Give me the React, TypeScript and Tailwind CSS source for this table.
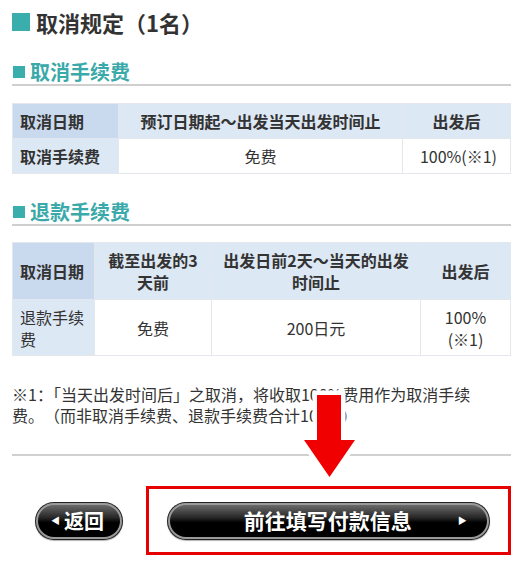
import React from "react";

const font = { fontFamily: '"Noto Sans CJK SC", "Noto Sans", sans-serif' };

function SubHead({ children }: { children: React.ReactNode }) {
  return (
    <div className="flex items-center h-[26px] border-b-2 border-[#cfcfcf]">
      <span className="w-[12px] h-[12px] bg-[#3aadad] ml-[1px] mr-[5px]" />
      <span className="text-[20px] font-bold text-[#3aa9a9] leading-none">{children}</span>
    </div>
  );
}

function Pill({ children, className }: { children: React.ReactNode; className?: string }) {
  return (
    <div
      className={
        "rounded-full p-[1px] bg-[#222] shadow-[0_1px_1px_rgba(0,0,0,0.3)] " + (className || "")
      }
    >
      <div className="h-full rounded-full border-2 border-[#9a9a9a] bg-[linear-gradient(to_bottom,#6a6a6a_0%,#262626_40%,#000_55%,#000_100%)] flex items-center text-white font-bold">
        {children}
      </div>
    </div>
  );
}

export default function App() {
  const th1 = "bg-[#c9d9ee] border border-[#e4e8ee] font-bold text-left pl-[7px]";
  const th = "bg-[#dde8f5] border border-[#e4e8ee] font-bold text-center";
  const td = "bg-white border border-[#e4e8ee] text-center";
  return (
    <div className="relative w-[523px] h-[573px] bg-white text-[#333] px-3 pt-[7px]" style={font}>
      <div className="flex items-center h-[30px]">
        <span className="w-[18px] h-[18px] bg-[#3aadad] mr-[6px]" />
        <span className="text-[22px] font-bold text-[#333] leading-none">取消规定（1名）</span>
      </div>

      <div className="mt-[23px]">
        <SubHead>取消手续费</SubHead>
      </div>

      <table className="mt-[17px] w-[499px] border-collapse text-[16px] table-fixed">
        <colgroup>
          <col className="w-[106px]" />
          <col className="w-[284px]" />
          <col />
        </colgroup>
        <tbody>
          <tr className="h-[35px]">
            <td className={th1}>取消日期</td>
            <td className={th}>预订日期起～出发当天出发时间止</td>
            <td className={th}>出发后</td>
          </tr>
          <tr className="h-[35px]">
            <td className={"bg-[#dde8f5] border border-[#e4e8ee] font-bold text-left pl-[7px]"}>取消手续费</td>
            <td className={td}>免费</td>
            <td className={td + " pl-[4px]"}>100%(※1)</td>
          </tr>
        </tbody>
      </table>

      <div className="mt-[26px]">
        <SubHead>退款手续费</SubHead>
      </div>

      <table className="mt-[16px] w-[499px] border-collapse text-[16px] leading-[22px] table-fixed">
        <colgroup>
          <col className="w-[82px]" />
          <col className="w-[117px]" />
          <col className="w-[209px]" />
          <col />
        </colgroup>
        <tbody>
          <tr className="h-[57px]">
            <td className={th1}>取消日期</td>
            <td className={th + " px-[10px]"}>截至出发的3天前</td>
            <td className={th + " px-[8px]"}>出发日前2天～当天的出发时间止</td>
            <td className={th}>出发后</td>
          </tr>
          <tr className="h-[56px]">
            <td className={"bg-[#dde8f5] border border-[#e4e8ee] text-left pl-[7px] pr-[6px]"}>退款手续费</td>
            <td className={td}>免费</td>
            <td className={td}>200日元</td>
            <td className={td + " px-[10px]"}>100%(※1)</td>
          </tr>
        </tbody>
      </table>

      <p className="mt-[28px] text-[16px] leading-[21px] text-[#333] pr-[20px]">
        ※1：「当天出发时间后」之取消，将收取100%费用作为取消手续费。　（而非取消手续费、退款手续费合计100%）
      </p>

      <div className="mt-[28px] h-[2px] bg-[#d0d0d0]" />

      <div className="mt-[30px] flex items-center pl-[23px]">
        <Pill className="w-[88px] h-[38px]">
          <span className="text-[9px] ml-[13px] mr-[4px]">◀</span>
          <span className="text-[20px] leading-none">返回</span>
        </Pill>
        <div className="ml-[23px] w-[366px] h-[69px] border-[3px] border-[#e60000] flex items-center pl-[18px]">
          <Pill className="w-[323px] h-[38px]">
            <span className="flex-1 text-center text-[21px] leading-none pl-[28px]">前往填写付款信息</span>
            <span className="text-[9px] mr-[20px]">▶</span>
          </Pill>
        </div>
      </div>

      <svg className="absolute left-[290px] top-[380px]" width="80" height="110" viewBox="0 0 80 110">
        <polygon
          points="27,15 51,15 51,60 65,60 39.5,97 14,60 27,60"
          fill="#f00000"
          stroke="white"
          strokeWidth="9"
          strokeLinejoin="miter"
          style={{ paintOrder: "stroke" }}
        />
      </svg>
    </div>
  );
}
